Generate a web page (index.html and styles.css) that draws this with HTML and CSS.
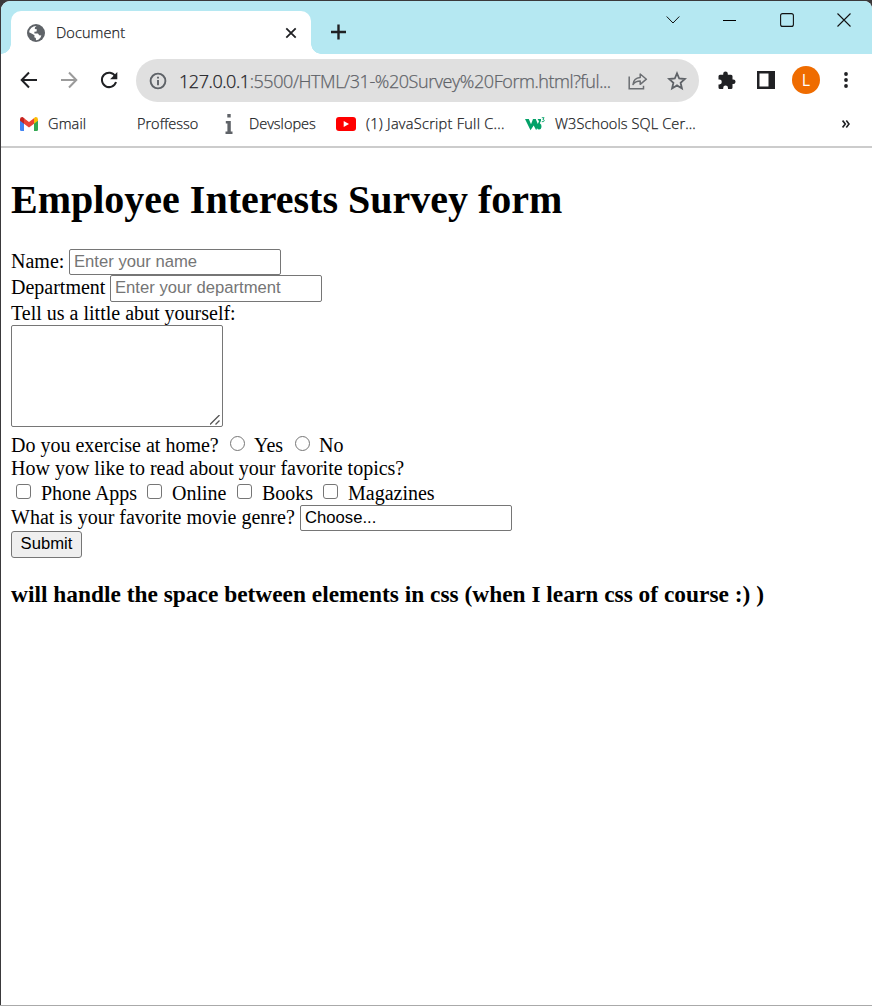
FILE: index.html
```html
<!DOCTYPE html>
<html lang="en">
<head>
<meta charset="utf-8">
<title>Document</title>
<link rel="stylesheet" href="styles.css">
</head>
<body>
<div class="desktop">
<div class="window">
  <header class="titlebar">
    <div class="tab">
      <svg class="globe" width="18" height="18" viewBox="0 0 18 18"><circle cx="9" cy="9" r="9" fill="#5f6368"/><path d="M9.500 2 8 3.200 7.800 5l2 .2-.2 2.200-2.200.4v1.800H11l1.200 1.600 2.200.2-1 2.300-2.100 2L9 16.300l-.2-2.200-1.500-.8.200-2-2-1.200L2.100 8.300a7 7 0 0 1 7.100-6.300z" fill="#fff"/><path d="M12 2.800 10.700 5l1.300 1.200-1 1.500 1.500 1.100h3.400A7 7 0 0 0 12 2.800z" fill="#5f6368"/></svg>
      <span class="tab-title">Document</span>
      <svg class="tab-close" width="12" height="12" viewBox="0 0 12 12"><path d="M1.300 1.300l9.400 9.400M10.700 1.300l-9.400 9.400" stroke="#202124" stroke-width="1.800"/></svg>
    </div>
    <svg class="new-tab" width="16" height="16" viewBox="0 0 16 16"><path d="M7.500 .5v15M0 8h15" stroke="#202124" stroke-width="2.400"/></svg>
    <div class="controls">
      <svg width="14" height="14" viewBox="0 0 14 14"><path d="M.7 3.500 7 10l6.300-6.500" fill="none" stroke="#111" stroke-width="1"/></svg>
      <svg width="14" height="14" viewBox="0 0 14 14"><path d="M0 7.500h13" stroke="#000" stroke-width="1"/></svg>
      <svg width="14" height="14" viewBox="0 0 14 14"><rect x=".6" y=".6" width="12.800" height="12.800" rx="2" fill="none" stroke="#111" stroke-width="1.100"/></svg>
      <svg width="14" height="14" viewBox="0 0 14 14"><path d="M.5.500l13 13M13.500.500l-13 13" stroke="#111" stroke-width="1.100"/></svg>
    </div>
  </header>
  <div class="toolbar">
    <svg class="nav" width="18" height="18" viewBox="0 0 18 18"><path d="M17 9H2M9 1.500 1.700 9 9 16.500" fill="none" stroke="#202124" stroke-width="2"/></svg>
    <svg class="nav" width="18" height="18" viewBox="0 0 18 18"><path d="M1 9h15M9 1.500 16.300 9 9 16.500" fill="none" stroke="#9b9b9b" stroke-width="2"/></svg>
    <svg class="nav" width="18" height="18" viewBox="0 0 18 18"><path d="M15.300 5.200A7.200 7.200 0 1 0 16 11" fill="none" stroke="#202124" stroke-width="2"/><path d="M17.300 1v7.200H10.100z" fill="#202124"/></svg>
    <div class="omnibox">
      <svg class="info" width="18" height="18" viewBox="0 0 18 18"><circle cx="9" cy="9" r="7.400" fill="none" stroke="#5f6368" stroke-width="1.900"/><path d="M9 8v5.200M9 4.700v1.800" stroke="#5f6368" stroke-width="1.900"/></svg>
      <span class="url"><span class="host">127.0.0.1</span>:5500/HTML/31-%20Survey%20Form.html?ful...</span>
      <svg class="share" width="20" height="18" viewBox="0 0 20 18"><path d="M1.200 4.500v12.200h14.300v-2.900" fill="none" stroke="#6b6e72" stroke-width="1.500"/><path d="M5 12.500c.4-4.500 3-6.800 7.200-7.100V2l6.200 5.200-6.200 5.100V9.100C9 9.100 6.800 10 5 12.500z" fill="none" stroke="#6b6e72" stroke-width="1.500" stroke-linejoin="round"/></svg>
      <svg class="star" width="20" height="20" viewBox="0 0 20 20"><path d="M10 2.300l2.200 5.200 5.700.5-4.300 3.800 1.300 5.600-4.900-3-4.900 3 1.300-5.600L2.100 8l5.700-.5z" fill="none" stroke="#5f6368" stroke-width="1.800"/></svg>
    </div>
    <svg class="puzzle" width="18" height="19" viewBox="0 0 18 19"><path d="M.500 5.300q0-1.500 1.500-1.500h3.200V2.700a2.300 2.300 0 0 1 4.600 0v1.100h3.200q1.500 0 1.500 1.500v3.300h.8a2.200 2.200 0 0 1 0 4.500h-.8v3.400q0 1.500-1.500 1.500h-3v-1a2.400 2.400 0 0 0-4.800 0v1H2Q.5 18 .5 16.500v-3.100h.9a2.400 2.400 0 0 0 0-4.800H.5z" fill="#202124"/></svg>
    <svg class="panel" width="18" height="18" viewBox="0 0 18 18"><path d="M0 0h18v18H0zM2.500 2.500v13h9v-13z" fill="#202124" fill-rule="evenodd"/></svg>
    <span class="avatar">L</span>
    <svg class="kebab" width="4" height="16" viewBox="0 0 4 16"><g fill="#202124"><circle cx="2" cy="2" r="1.900"/><circle cx="2" cy="8" r="1.900"/><circle cx="2" cy="14" r="1.900"/></g></svg>
  </div>
  <nav class="bookmarks">
    <svg width="18" height="14" viewBox="0 0 18 14"><path d="M0 3.500v9.300q0 1.200 1.200 1.200H4V5z" fill="#4285f4"/><path d="M18 3.500v9.300q0 1.200-1.200 1.200H14V5z" fill="#34a853"/><path d="M4 1.200v5.500L9 10.400l5-3.700V1.200L9 5z" fill="#ea4335"/><path d="M0 2.200Q.2 0 2.200 0 3 0 4 1.200v5.500L0 3.800z" fill="#c5221f"/><path d="M18 2.200Q17.800 0 15.800 0 15 0 14 1.200v5.500l4-2.900z" fill="#fbbc04"/></svg>
    <span class="bm bm-gmail">Gmail</span>
    <span class="bm bm-prof">Proffesso</span>
    <svg width="8" height="20" viewBox="0 0 8 20"><path d="M2.300 0h3.400v3.500H2.300zM.8 7h5v10.500H7.500V20H.5v-2.500h1.900v-8H.8z" fill="#5f6368"/></svg>
    <span class="bm bm-dev">Devslopes</span>
    <svg width="20" height="14" viewBox="0 0 20 14"><rect width="20" height="14" rx="3" fill="#f00"/><path d="M7.700 4v6l5.300-3z" fill="#fff"/></svg>
    <span class="bm bm-js">(1) JavaScript Full C...</span>
    <svg width="20" height="14" viewBox="0 0 20 14"><path d="M0 2h3.800L6 7.300 8 2h2.800l2 5L14 4.200 12.500 2H16v1.800l-1.200 2.400q2 1.100 1.700 3.800-.4 2.600-2.500 2.500-1.200 0-2-1.200l-.8 2L8.700 8.500 5.500 13.300z" fill="#04a168"/><path d="M16.800.700h2.300l-1.200 1.800q1.400 0 1.400 1.200 0 1.200-2.500 1" fill="none" stroke="#04a168" stroke-width=".9"/></svg>
    <span class="bm bm-w3">W3Schools SQL Cer...</span>
    <svg class="more" width="8" height="8" viewBox="0 0 8 8"><path d="M.6.600 3.300 4 .6 7.400M4.300.600 7 4 4.300 7.400" fill="none" stroke="#202124" stroke-width="1.600"/></svg>
  </nav>
  <main class="page">
    <h1>Employee Interests Survey form</h1>
    <form>
      <div class="row"><label class="l-name" for="n">Name:</label><input class="field" id="n" placeholder="Enter your name"></div>
      <div class="row row-dept"><label class="l-dept" for="d">Department</label><input class="field field-tall" id="d" placeholder="Enter your department"></div>
      <div class="line">Tell us a little abut yourself:</div>
      <div class="about-wrap">
        <textarea class="about"></textarea>
        <svg class="grip" width="10" height="10" viewBox="0 0 10 10"><path d="M0 9.500 9.500 0M5.500 9.500l4-4" stroke="#555" stroke-width="1.300"/></svg>
      </div>
      <div class="line"><span class="q-home">Do you exercise at home?</span><input class="mark" type="radio" name="h"><span class="o-yes">Yes</span><input class="mark" type="radio" name="h"><span>No</span></div>
      <div class="line">How yow like to read about your favorite topics?</div>
      <div class="line topics"><input class="mark" type="checkbox"><span class="o-phone">Phone Apps</span><input class="mark" type="checkbox"><span class="o-online">Online</span><input class="mark" type="checkbox"><span class="o-books">Books</span><input class="mark" type="checkbox"><span>Magazines</span></div>
      <div class="row"><label class="l-genre" for="g">What is your favorite movie genre?</label><input class="field" id="g" value="Choose..."></div>
      <button class="submit" type="button">Submit</button>
    </form>
    <h3>will handle the space between elements in css (when I learn css of course :) )</h3>
  </main>
</div>
</div>
</body>
</html>
```
FILE: styles.css
```css
* { box-sizing: border-box; }
body { margin: 0; background: #3a393b; }
svg { display: block; flex: none; }
.desktop { height: 1006px; padding: 1px 0 0 1px; border-bottom: 1px solid #aaa; overflow: hidden; }
.window { height: 1004px; background: #fff; border-radius: 9px 8px 0 0; overflow: hidden; font-family: "Open Sans", "Noto Sans", sans-serif; color: #202124; }
.titlebar { display: flex; height: 53px; padding-left: 10px; background: #b5e8f2; }
.tab { position: relative; display: flex; align-items: center; width: 300px; height: 43px; margin-top: 10px; padding: 0 14px 0 16px; border-radius: 10px 10px 0 0; background: #fff; }
.tab::before, .tab::after { content: ""; position: absolute; bottom: 0; width: 10px; height: 10px; }
.tab::before { left: -10px; background: radial-gradient(circle at 0 0, transparent 9.5px, #fff 10px); }
.tab::after { right: -10px; background: radial-gradient(circle at 100% 0, transparent 9.5px, #fff 10px); }
.tab-title { flex: 1; margin-left: 11px; font-size: 14.5px; font-weight: 300; line-height: 20px; letter-spacing: .1px; }
.tab-title, .url, .bm { -webkit-text-stroke: .25px currentColor; }
.new-tab { margin: 23px 0 0 20px; }
.controls { display: flex; gap: 43px; margin: 12px 21px 0 auto; }
.toolbar { display: flex; align-items: center; height: 53px; padding: 0 24px 0 19px; }
.nav { margin: 0 22px 2px 0; }
.omnibox { display: flex; align-items: center; width: 563px; height: 43px; margin-left: -4px; padding: 0 13px; border-radius: 22px; background: #e0e0e0; }
.url { width: 432px; margin-left: 12px; font-size: 18px; font-weight: 300; line-height: 26px; letter-spacing: -.43px; white-space: nowrap; color: #5f6368; }
.host { color: #202124; }
.share { margin-left: 17px; }
.star { margin-left: 19px; }
.puzzle { margin: 0 0 1px 19px; }
.panel { margin: 0 0 2px 21px; }
.avatar { width: 28px; height: 28px; margin: 0 0 2px 17px; border-radius: 50%; background: #ef6c00; color: #fff; font-size: 16px; line-height: 28px; text-align: center; }
.kebab { margin: 0 0 2px auto; }
.bookmarks { display: flex; align-items: center; height: 41px; padding: 0 22px 6px 19px; border-bottom: 2px solid #ccc; font-size: 14.5px; font-weight: 300; }
.bm { line-height: 20px; white-space: nowrap; }
.bm-gmail { width: 89px; margin-left: 10px; letter-spacing: .15px; }
.bm-prof { width: 88px; }
.bm-dev { width: 87px; margin-left: 16px; }
.bm-js { width: 159px; margin-left: 10px; letter-spacing: .28px; }
.bm-w3 { margin-left: 10px; letter-spacing: .12px; }
.more { margin-left: auto; }
.page { padding: 0 10px; font: 20px/23px "Liberation Serif", "Times New Roman", serif; color: #000; }
h1 { margin: 0; padding-top: 29px; height: 101px; font-size: 40px; line-height: 46px; white-space: nowrap; }
.row { display: flex; height: 26px; }
.row-dept { height: 27px; }
.line { display: flex; height: 23px; white-space: nowrap; }
label { white-space: nowrap; line-height: 25px; }
.l-name { width: 58px; }
.l-dept { width: 99px; }
.l-genre { width: 289px; }
.field { width: 212px; height: 26px; margin: 0; padding: 0 4px; border: 1px solid #767676; border-radius: 2px; font: 16.67px "Liberation Sans", Arial, sans-serif; outline: none; }
.field-tall { height: 27px; padding-bottom: 2px; }
.field::placeholder { color: #757575; }
.about-wrap { position: relative; width: 212px; height: 109px; }
.about { display: block; width: 212px; height: 102px; margin: 0; border: 1px solid #767676; border-radius: 2px; resize: none; }
.grip { position: absolute; right: 3px; top: 90px; }
.mark { appearance: none; width: 15px; height: 15px; margin: 2px 10px 0 5px; border: 1px solid #767676; border-radius: 3px; background: #fff; }
.mark[type="radio"] { border-radius: 50%; margin-right: 9px; }
.q-home { width: 214px; }
.o-yes { width: 36px; }
.topics { height: 25px; padding-top: 2px; }
.o-phone { width: 101px; }
.o-online { width: 60px; }
.o-books { width: 56px; }
.submit { display: block; width: 71px; height: 27px; padding: 0 0 2px; border: 1px solid #767676; border-radius: 3px; background: #efefef; font: 16.67px "Liberation Sans", Arial, sans-serif; color: #000; }
h3 { margin: 23px 0 0; font-size: 23.4px; line-height: 27px; white-space: nowrap; }
```
